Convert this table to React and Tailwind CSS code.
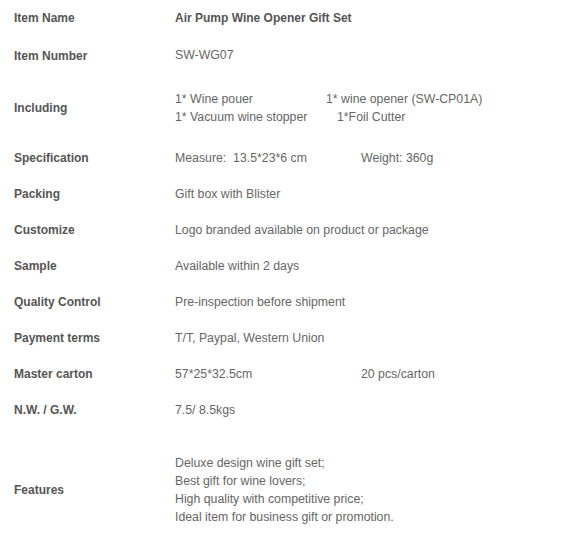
const rows = [
  { label: "Item Name", h: "h-[35px]", value: <p className="font-bold text-[12px] text-[#555]">Air Pump Wine Opener Gift Set</p> },
  { label: "Item Number", h: "h-[41px]", value: <p>SW-WG07</p> },
  {
    label: "Including",
    h: "h-[64px]",
    value: (
      <div className="leading-[18px]">
        <p className="flex">
          <span className="w-[151px]">1* Wine pouer</span>
          <span>1* wine opener (SW-CP01A)</span>
        </p>
        <p className="flex">
          <span className="w-[162px]">1* Vacuum wine stopper</span>
          <span>1*Foil Cutter</span>
        </p>
      </div>
    ),
  },
  {
    label: "Specification",
    h: "h-[36px]",
    value: (
      <p className="flex">
        <span className="w-[186px]">Measure:&nbsp; 13.5*23*6 cm</span>
        <span>Weight: 360g</span>
      </p>
    ),
  },
  { label: "Packing", h: "h-[36px]", value: <p>Gift box with Blister</p> },
  { label: "Customize", h: "h-[36px]", value: <p>Logo branded available on product or package</p> },
  { label: "Sample", h: "h-[36px]", value: <p>Available within 2 days</p> },
  { label: "Quality Control", h: "h-[36px]", value: <p>Pre-inspection before shipment</p> },
  { label: "Payment terms", h: "h-[36px]", value: <p>T/T, Paypal, Western Union</p> },
  {
    label: "Master carton",
    h: "h-[36px]",
    value: (
      <p className="flex">
        <span className="w-[186px]">57*25*32.5cm</span>
        <span>20 pcs/carton</span>
      </p>
    ),
  },
  { label: "N.W. / G.W.", h: "h-[36px]", value: <p>7.5/ 8.5kgs</p> },
  {
    label: "Features",
    h: "h-[124px]",
    value: (
      <div className="leading-[18px]">
        <p>Deluxe design wine gift set;</p>
        <p>Best gift for wine lovers;</p>
        <p>High quality with competitive price;</p>
        <p>Ideal item for business gift or promotion.</p>
      </div>
    ),
  },
];

const App = () => {
  return (
    <div className="w-[587px] h-[545px] overflow-hidden bg-white font-['Liberation_Sans',Arial,sans-serif] text-[12px]">
      {rows.map((row) => (
        <div key={row.label} className={`flex items-center ${row.h}`}>
          <div className="w-[175px] shrink-0 pl-[14px] font-bold text-[#555]">{row.label}</div>
          <div className="flex-1 text-[12.3px] text-[#666]">{row.value}</div>
        </div>
      ))}
    </div>
  );
};

export default App;
